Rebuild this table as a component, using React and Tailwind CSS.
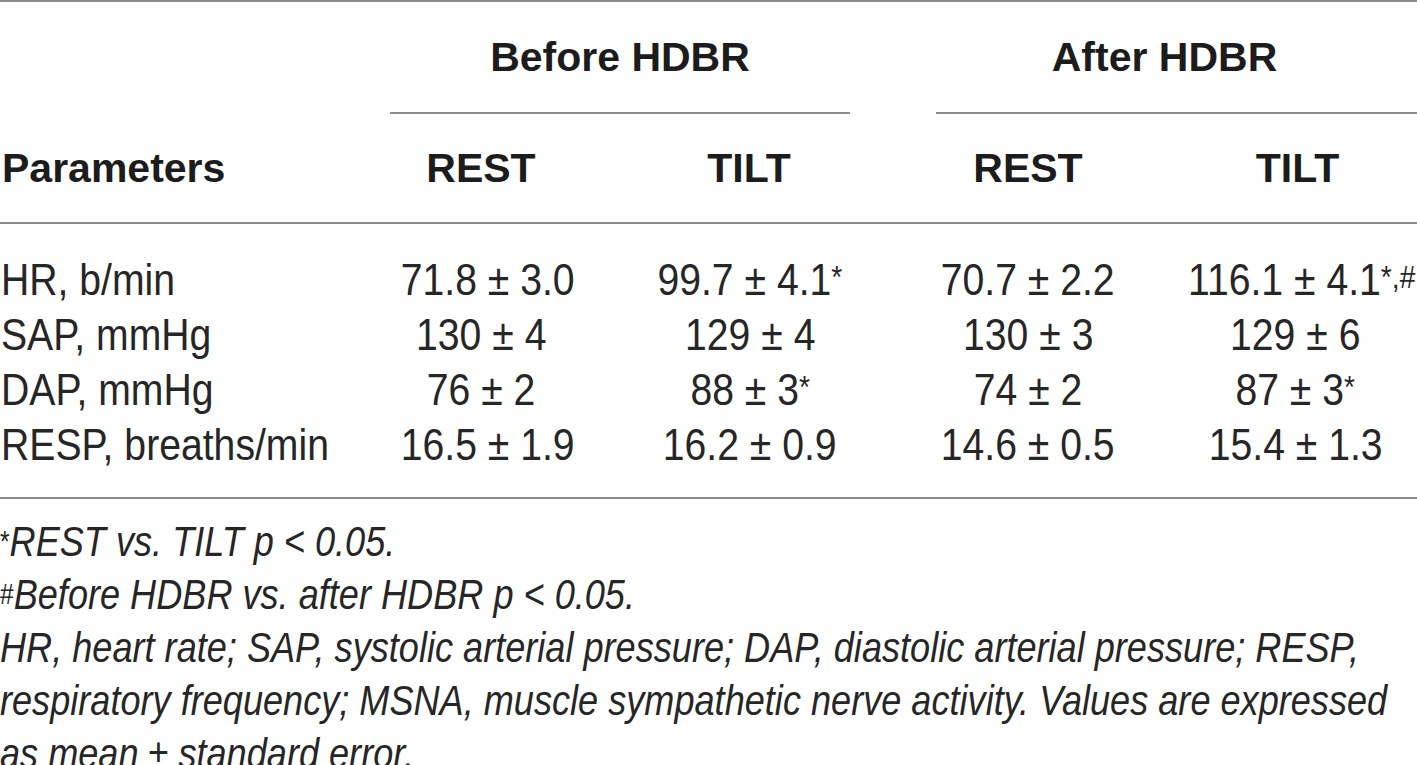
import React from "react";

const sans = { fontFamily: "'Liberation Sans', Arial, sans-serif" };

const rows = [
    ["HR, b/min", "71.8 ± 3.0", ["99.7 ± 4.1", "*"], "70.7 ± 2.2", ["116.1 ± 4.1", "*,#"]],
    ["SAP, mmHg", "130 ± 4", "129 ± 4", "130 ± 3", "129 ± 6"],
    ["DAP, mmHg", "76 ± 2", ["88 ± 3", "*"], "74 ± 2", ["87 ± 3", "*"]],
    ["RESP, breaths/min", "16.5 ± 1.9", "16.2 ± 0.9", "14.6 ± 0.5", "15.4 ± 1.3"],
];

// reference uses a light condensed face, so squeeze Arial-metric text horizontally
function Val({ v }) {
    if (Array.isArray(v)) {
        return (
            <span className="inline-block scale-x-[0.89]">
                {v[0]}
                <sup className="text-[0.72em] relative top-[-0.22em]">{v[1]}</sup>
            </span>
        );
    }
    return <span className="inline-block scale-x-[0.89]">{v}</span>;
}

function Note({ mark, children }) {
    return (
        <div className="origin-left scale-x-[0.84]">
            {mark && <sup className="text-[0.68em] relative top-[-0.18em] not-italic">{mark}</sup>}
            {children}
        </div>
    );
}

export default function App() {
    return (
        <div className="w-[1417px] h-[765px] bg-white text-[#1c1c1c] overflow-hidden" style={sans}>
            <div className="border-t-2 border-[#8a8a8a]"></div>

            {/* group headers */}
            <div className="flex h-[112px] text-[41px] font-bold leading-none">
                <div className="w-[390px]"></div>
                <div className="w-[460px] flex items-center justify-center border-b-2 border-[#8a8a8a]">Before HDBR</div>
                <div className="w-[86px]"></div>
                <div className="flex-1 flex items-center justify-center pr-[24px] border-b-2 border-[#8a8a8a]">After HDBR</div>
            </div>

            {/* column headers */}
            <div className="grid grid-cols-[390px_182px_356px_200px_1fr] h-[110px] items-center text-[41px] font-bold leading-none border-b-2 border-[#8a8a8a]">
                <div className="pl-[2px]">Parameters</div>
                <div className="text-center">REST</div>
                <div className="text-center pr-[2px]">TILT</div>
                <div className="text-center">REST</div>
                <div className="text-center pl-[50px]">TILT</div>
            </div>

            {/* body */}
            <div className="pt-[28px] pb-[25px] border-b-2 border-[#8a8a8a] text-[44px] leading-none text-[#262626]">
                {rows.map((r) => (
                    <div key={r[0]} className="grid grid-cols-[390px_182px_356px_200px_1fr] h-[55px] items-center whitespace-nowrap">
                        <div className="pl-[1px]"><span className="inline-block origin-left scale-x-[0.89]">{r[0]}</span></div>
                        <div className="text-center"><Val v={r[1]} /></div>
                        <div className="text-center"><Val v={r[2]} /></div>
                        <div className="text-center"><Val v={r[3]} /></div>
                        <div className="text-center pl-[46px]"><Val v={r[4]} /></div>
                    </div>
                ))}
            </div>

            {/* footnotes */}
            <div className="pt-[16px] text-[43px] leading-[53px] italic text-[#262626] whitespace-nowrap">
                <Note mark="*">REST vs. TILT p &lt; 0.05.</Note>
                <Note mark="#">Before HDBR vs. after HDBR p &lt; 0.05.</Note>
                <Note>HR, heart rate; SAP, systolic arterial pressure; DAP, diastolic arterial pressure; RESP,</Note>
                <Note>respiratory frequency; MSNA, muscle sympathetic nerve activity. Values are expressed</Note>
                <Note>as mean ± standard error.</Note>
            </div>
        </div>
    );
}
